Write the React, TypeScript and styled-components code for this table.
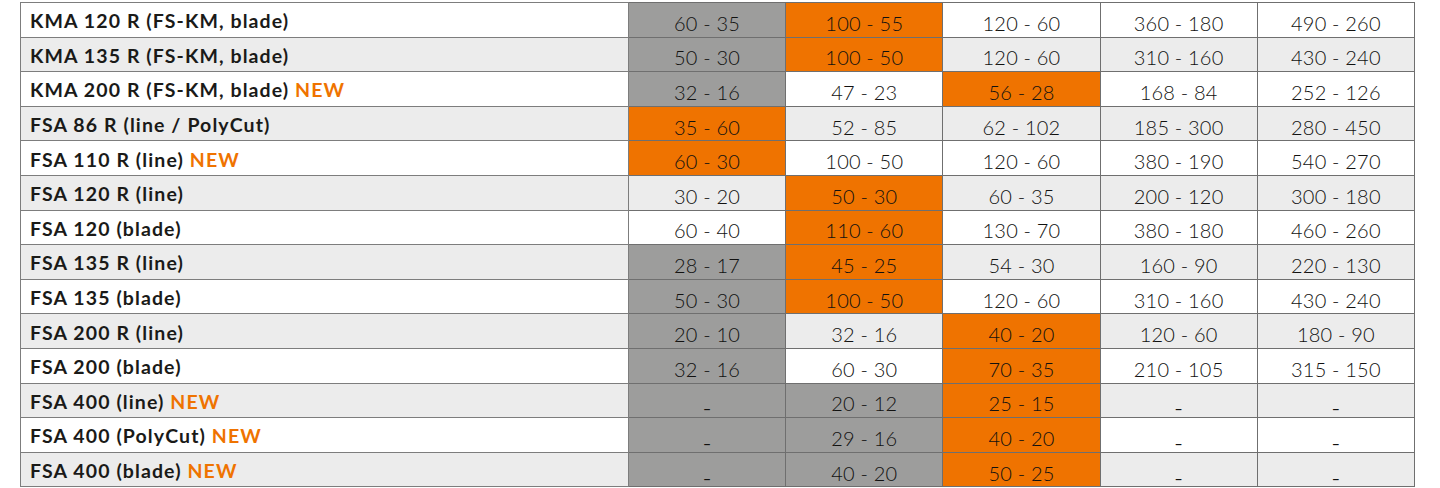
import React from "react";
import styled, { createGlobalStyle } from "styled-components";

const Global = createGlobalStyle`
  html, body { margin: 0; padding: 0; background: #ffffff; }
  body { font-family: "Lato", "Liberation Sans", sans-serif; }
`;

type Tone = "g" | "o" | "n";

const rows: { label: string; isNew?: boolean; tones: Tone[]; values: string[] }[] = [
  { label: "KMA 120 R (FS-KM, blade)", tones: ["g", "o", "n", "n", "n"], values: ["60 - 35", "100 - 55", "120 - 60", "360 - 180", "490 - 260"] },
  { label: "KMA 135 R (FS-KM, blade)", tones: ["g", "o", "n", "n", "n"], values: ["50 - 30", "100 - 50", "120 - 60", "310 - 160", "430 - 240"] },
  { label: "KMA 200 R (FS-KM, blade)", isNew: true, tones: ["g", "n", "o", "n", "n"], values: ["32 - 16", "47 - 23", "56 - 28", "168 - 84", "252 - 126"] },
  { label: "FSA 86 R (line / PolyCut)", tones: ["o", "n", "n", "n", "n"], values: ["35 - 60", "52 - 85", "62 - 102", "185 - 300", "280 - 450"] },
  { label: "FSA 110 R (line)", isNew: true, tones: ["o", "n", "n", "n", "n"], values: ["60 - 30", "100 - 50", "120 - 60", "380 - 190", "540 - 270"] },
  { label: "FSA 120 R (line)", tones: ["n", "o", "n", "n", "n"], values: ["30 - 20", "50 - 30", "60 - 35", "200 - 120", "300 - 180"] },
  { label: "FSA 120 (blade)", tones: ["n", "o", "n", "n", "n"], values: ["60 - 40", "110 - 60", "130 - 70", "380 - 180", "460 - 260"] },
  { label: "FSA 135 R (line)", tones: ["g", "o", "n", "n", "n"], values: ["28 - 17", "45 - 25", "54 - 30", "160 - 90", "220 - 130"] },
  { label: "FSA 135 (blade)", tones: ["g", "o", "n", "n", "n"], values: ["50 - 30", "100 - 50", "120 - 60", "310 - 160", "430 - 240"] },
  { label: "FSA 200 R (line)", tones: ["g", "n", "o", "n", "n"], values: ["20 - 10", "32 - 16", "40 - 20", "120 - 60", "180 - 90"] },
  { label: "FSA 200 (blade)", tones: ["g", "n", "o", "n", "n"], values: ["32 - 16", "60 - 30", "70 - 35", "210 - 105", "315 - 150"] },
  { label: "FSA 400 (line)", isNew: true, tones: ["g", "g", "o", "n", "n"], values: ["–", "20 - 12", "25 - 15", "–", "–"] },
  { label: "FSA 400 (PolyCut)", isNew: true, tones: ["g", "g", "o", "n", "n"], values: ["–", "29 - 16", "40 - 20", "–", "–"] },
  { label: "FSA 400 (blade)", isNew: true, tones: ["g", "g", "o", "n", "n"], values: ["–", "40 - 20", "50 - 25", "–", "–"] },
];

const Page = styled.div`
  padding: 2px 0 0 20px;
`;

const Table = styled.table`
  border-collapse: collapse;
  width: 1395px;
  table-layout: fixed;
  border: 1px solid #8a8a8a;
`;

const Row = styled.tr<{ $alt: boolean }>`
  height: 34.6px;
  background: ${(p) => (p.$alt ? "#ececec" : "#ffffff")};
`;

const LabelCell = styled.td`
  box-sizing: border-box;
  padding: 2px 0 0 9px;
  border: 1px solid #7d7d7d;
  font-family: "Lato", "Liberation Sans", sans-serif;
  font-weight: 700;
  font-size: 19.5px;
  color: #1a1a18;
  letter-spacing: 1.1px;
  white-space: nowrap;
  vertical-align: middle;
`;

const New = styled.span`
  color: #ef7300;
`;

const toneBg: Record<Tone, string | undefined> = {
  g: "#9d9d9c",
  o: "#ef7300",
  n: undefined,
};

const ValueCell = styled.td<{ $tone: Tone }>`
  box-sizing: border-box;
  padding: 6px 0 0 0;
  border: 1px solid #6f6f6f;
  ${(p) => (toneBg[p.$tone] ? `background: ${toneBg[p.$tone]};` : "")}
  font-family: "Lato", "Liberation Sans", sans-serif;
  font-weight: 300;
  font-size: 20px;
  color: #111110;
  text-align: center;
  vertical-align: middle;
  white-space: nowrap;
  letter-spacing: 0.2px;
`;

const Dash = styled.span`
  display: inline-block;
  font-size: 14px;
  font-weight: 700;
  transform: translateY(3px);
`;

export default function App() {
  return (
    <>
      <Global />
      <Page>
        <Table>
          <colgroup>
            <col style={{ width: 608 }} />
            <col />
            <col />
            <col />
            <col />
            <col />
          </colgroup>
          <tbody>
            {rows.map((r, i) => (
              <Row key={r.label} $alt={i % 2 === 1}>
                <LabelCell>
                  {r.label}
                  {r.isNew && <New> NEW</New>}
                </LabelCell>
                {r.values.map((v, j) => (
                  <ValueCell key={j} $tone={r.tones[j]}>
                    {v === "–" ? <Dash>–</Dash> : v}
                  </ValueCell>
                ))}
              </Row>
            ))}
          </tbody>
        </Table>
      </Page>
    </>
  );
}
